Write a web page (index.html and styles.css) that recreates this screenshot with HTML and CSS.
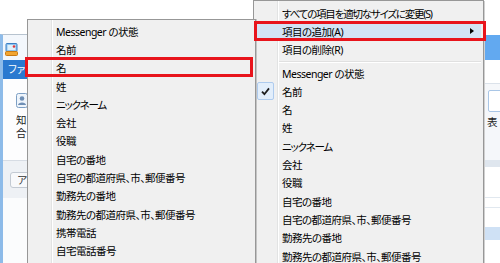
FILE: index.html
```html
<!DOCTYPE html>
<html lang="ja">
<head>
<meta charset="utf-8">
<link rel="stylesheet" href="styles.css">
</head>
<body>
<div class="screen">
  <div class="win win-left">
    <div class="wl-title">
      <svg class="wl-icon" width="13" height="13" viewBox="0 0 13 13">
        <rect x="1" y="0.5" width="11" height="8" rx="1" fill="#8fc3ee" stroke="#3b7fc4" stroke-width="1"/>
        <rect x="2.5" y="2" width="8" height="5" fill="#dff0fb"/>
        <circle cx="9" cy="3.5" r="1.3" fill="#e0383a"/>
        <rect x="0.5" y="8.5" width="12" height="4" rx="1" fill="#f2a531" stroke="#c97a12" stroke-width="1"/>
      </svg>
    </div>
    <div class="wl-tabs">ファ</div>
    <div class="wl-ribbon">
      <svg class="wl-btnicon" width="12" height="15" viewBox="0 0 12 15">
        <rect x="0.5" y="0.5" width="11" height="14" rx="2" fill="#eef4fb" stroke="#7d9fc4"/>
        <circle cx="6" cy="5.5" r="2.3" fill="#6f8fb5"/>
        <path d="M2 12 C2 8.5 10 8.5 10 12 Z" fill="#6f8fb5"/>
      </svg>
      <div class="wl-lbl">知<br>合</div>
    </div>
    <div class="wl-bar"><div class="wl-pill">ア</div></div>
    <div class="wl-body"></div>
  </div>

  <div class="win win-right">
    <div class="wr-title"></div>
    <div class="wr-gap"></div>
    <div class="wr-panel">
      <div class="wr-btn"></div>
      <div class="wr-lbl">表</div>
    </div>
    <div class="wr-head"></div>
    <div class="wr-rows">
      <div class="wr-row"></div>
      <div class="wr-row wr-line"></div>
      <div class="wr-row wr-line"></div>
      <div class="wr-row wr-sel"></div>
    </div>
  </div>

  <div class="menu menu-main">
    <div class="row tight">すべての項目を適切なサイズに変更(S)</div>
    <div class="row hot mark">項目の追加(A)<span class="arrow"></span></div>
    <div class="row">項目の削除(R)</div>
    <div class="sep"></div>
    <div class="row">Messenger の状態</div>
    <div class="row"><span class="chk"><svg width="9" height="9" viewBox="0 0 9 9"><path d="M1 4.6 L3.4 7.2 L8 1.4" fill="none" stroke="#1e1e1e" stroke-width="1.8"/></svg></span>名前</div>
    <div class="row">名</div>
    <div class="row">姓</div>
    <div class="row tight">ニックネーム</div>
    <div class="row">会社</div>
    <div class="row">役職</div>
    <div class="row">自宅の番地</div>
    <div class="row">自宅の都道府県、市、郵便番号</div>
    <div class="row">勤務先の番地</div>
    <div class="row">勤務先の都道府県、市、郵便番号</div>
  </div>

  <div class="menu menu-sub">
    <div class="row">Messenger の状態</div>
    <div class="row">名前</div>
    <div class="row mark mark-sub">名</div>
    <div class="row">姓</div>
    <div class="row tight">ニックネーム</div>
    <div class="row">会社</div>
    <div class="row">役職</div>
    <div class="row">自宅の番地</div>
    <div class="row">自宅の都道府県、市、郵便番号</div>
    <div class="row">勤務先の番地</div>
    <div class="row">勤務先の都道府県、市、郵便番号</div>
    <div class="row">携帯電話</div>
    <div class="row">自宅電話番号</div>
  </div>
</div>
</body>
</html>
```

FILE: styles.css
```css
html, body {
  margin: 0;
  padding: 0;
  background: #ffffff;
}

.screen {
  position: relative;
  width: 500px;
  height: 263px;
  overflow: hidden;
  background: #ffffff;
  font-family: "Noto Sans", "Noto Sans CJK JP", sans-serif;
  color: #000;
}

/* background windows (partly hidden behind the menus) */
.win {
  position: absolute;
  overflow: hidden;
  display: grid;
}

.win-left {
  left: 0;
  top: 34px;
  width: 28px;
  height: 229px;
  grid-template-rows: 25px 19px 81px 38px 1fr;
  border-left: 3px solid #8dbbe9;
  border-top: 1px solid #b7c3cf;
  box-sizing: border-box;
  background: #fbfcfd;
}

.wl-title {
  padding: 8px 0 0 2px;
  background: #f3f7fc;
}

.wl-icon {
  display: block;
}

.wl-tabs {
  line-height: 19px;
  background: #2a79d0;
  color: #fff;
  font-size: 10.5px;
  padding-left: 5px;
  white-space: nowrap;
  font-feature-settings: "palt";
}

.wl-ribbon {
  background: #fdfdfe;
  padding: 14px 0 0 13px;
}

.wl-btnicon {
  display: block;
  margin-bottom: 6px;
}

.wl-lbl {
  font-size: 10.5px;
  line-height: 13px;
  color: #222;
}

.wl-bar {
  background: #eef1f5;
  border-top: 1px solid #d6dce4;
  padding: 11px 0 0 7px;
}

.wl-pill {
  height: 16px;
  width: 30px;
  border: 1px solid #c3cad3;
  border-radius: 3px;
  background: #f8f9fb;
  font-size: 10.5px;
  line-height: 14px;
  padding-left: 6px;
  box-sizing: border-box;
  color: #333;
}

.wl-body {
  background: #fbfcfd;
}

.win-right {
  left: 483px;
  top: 35px;
  width: 17px;
  height: 228px;
  grid-template-rows: 25px 23px 77px 7px 1fr;
  background: #fff;
}

.wr-title {
  background: #62a9f0;
  border-left: 2px solid #3f8ad8;
}

.wr-gap {
  background: #fff;
}

.wr-panel {
  background: #f5f7fa;
  border-top: 1px solid #dbe2ea;
  padding: 6px 0 0 5px;
}

.wr-btn {
  width: 16px;
  height: 22px;
  border: 1px solid #a9c6e6;
  border-radius: 2px;
  background: #fff;
  box-sizing: border-box;
}

.wr-lbl {
  font-size: 10.5px;
  line-height: 12px;
  margin-top: 4px;
  margin-left: -1px;
  color: #222;
}

.wr-head {
  background: #dfe6ee;
}

.wr-rows {
  background: #fff;
}

.wr-row {
  height: 30px;
}

.wr-line {
  height: 10px;
  border-top: 1px solid #e1e8ef;
  box-sizing: border-box;
}

.wr-sel {
  height: 13px;
  margin-top: 10px;
  background: #cfe1f5;
}

/* context menus */
.menu {
  position: absolute;
  background-color: #f0f0f0;
  background-image: linear-gradient(90deg, transparent 23px, #e2e3e3 23px, #e2e3e3 24px, #ffffff 24px, #ffffff 25px, transparent 25px);
  border: 1px solid #979797;
  box-sizing: border-box;
  font-size: 10.5px;
  letter-spacing: -0.5px;
  font-feature-settings: "palt";
}

.menu-main {
  left: 253px;
  top: 0;
  width: 231px;
  height: 290px;
  padding-top: 3px;
  box-shadow: 1px 1px 0 #d0d0d0;
}

.menu-sub {
  left: 27px;
  top: 19px;
  width: 229px;
  height: 270px;
  padding-top: 2px;
  box-shadow: 1px 0 0 #c4c4c4;
}

.row {
  position: relative;
  display: flex;
  align-items: center;
  height: 18.3px;
  padding-left: 28px;
  white-space: nowrap;
}

.row.tight {
  letter-spacing: -1.2px;
}

.row.hot {
  margin: 0 2px;
  padding-left: 26px;
  background: #d3e3f4;
  border-radius: 2px;
}

.arrow {
  margin-left: auto;
  margin-right: 7px;
  width: 0;
  height: 0;
  border-left: 4px solid #000;
  border-top: 3.5px solid transparent;
  border-bottom: 3.5px solid transparent;
}

.chk {
  display: flex;
  align-items: center;
  justify-content: center;
  width: 17px;
  height: 18px;
  margin-left: -25px;
  margin-right: 8px;
  background: #e2eefb;
  border: 1px solid #aecbee;
  border-radius: 2px;
  box-sizing: border-box;
}

.sep {
  height: 5px;
  margin: 0 2px 0 25px;
  background:
    linear-gradient(#e0e0e0, #e0e0e0) 0 2px / 100% 1px no-repeat,
    linear-gradient(#ffffff, #ffffff) 0 3px / 100% 1px no-repeat;
}

/* red annotation frames */
.mark::after {
  content: "";
  position: absolute;
  top: -1.3px;
  bottom: -0.4px;
  left: -2px;
  right: -5px;
  border: 3px solid #e8141c;
  z-index: 10;
}

.mark-sub::after {
  top: -1.6px;
  bottom: -0.1px;
  left: -3px;
  right: 2px;
}
```
